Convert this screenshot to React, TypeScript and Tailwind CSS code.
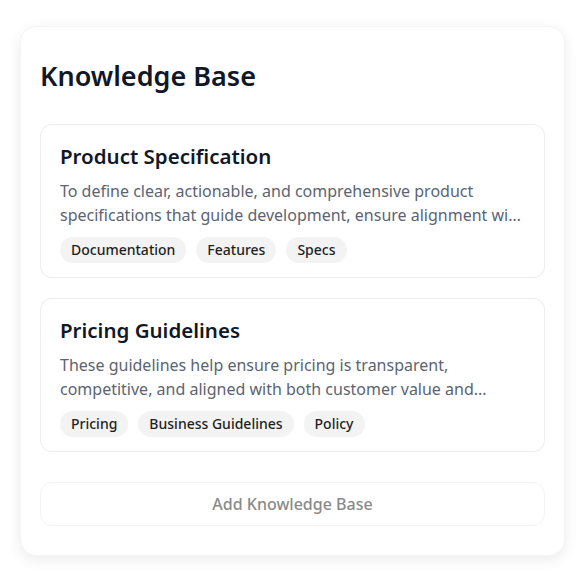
import React from "react";

type Item = { title: string; lines: [string, string]; tags: string[] };

// descriptions are clamped to two lines; second line cuts off like the source
const ITEMS: Item[] = [
  {
    title: "Product Specification",
    lines: [
      "To define clear, actionable, and comprehensive product",
      "specifications that guide development, ensure alignment with stakeholders and deliver value.",
    ],
    tags: ["Documentation", "Features", "Specs"],
  },
  {
    title: "Pricing Guidelines",
    lines: [
      "These guidelines help ensure pricing is transparent,",
      "competitive, and aligned with both customer value and...",
    ],
    tags: ["Pricing", "Business Guidelines", "Policy"],
  },
];

function KnowledgeCard({ item }: { item: Item }) {
  return (
    <div className="rounded-xl border border-gray-200/70 bg-white px-[19px] pt-[17px] pb-[14px]">
      <h2 className="text-[20.5px] font-semibold leading-[28px] text-gray-900">{item.title}</h2>
      <p className="mt-[9px] text-base leading-6 text-[#5b6472]">
        <span className="block truncate">{item.lines[0]}</span>
        <span className="block truncate">{item.lines[1]}</span>
      </p>
      <div className="mt-[10px] flex gap-[10px]">
        {item.tags.map((tag) => (
          <span
            key={tag}
            className="rounded-full bg-[#f3f3f3] px-[11px] py-[3px] text-sm font-medium leading-5 text-[#1f1f1f]"
          >
            {tag}
          </span>
        ))}
      </div>
    </div>
  );
}

export default function App() {
  return (
    <div
      className="min-h-screen bg-white px-5 pt-[26px]"
      style={{ fontFamily: '"Noto Sans", "Open Sans", sans-serif' }}
    >
      <div className="rounded-2xl border border-gray-100 bg-white px-[19px] pt-[25px] pb-[29px] shadow-[0_4px_14px_rgba(0,0,0,0.08)]">
        <h1 className="text-[27px] font-semibold leading-[48px] text-gray-900">Knowledge Base</h1>
        <div className="mt-[24px] flex flex-col gap-[20px]">
          {ITEMS.map((item) => (
            <KnowledgeCard key={item.title} item={item} />
          ))}
        </div>
        <button className="mt-[30px] w-full rounded-xl border border-gray-100 py-[9px] text-base font-medium leading-6 text-[#8a8a8a]">
          Add Knowledge Base
        </button>
      </div>
    </div>
  );
}
